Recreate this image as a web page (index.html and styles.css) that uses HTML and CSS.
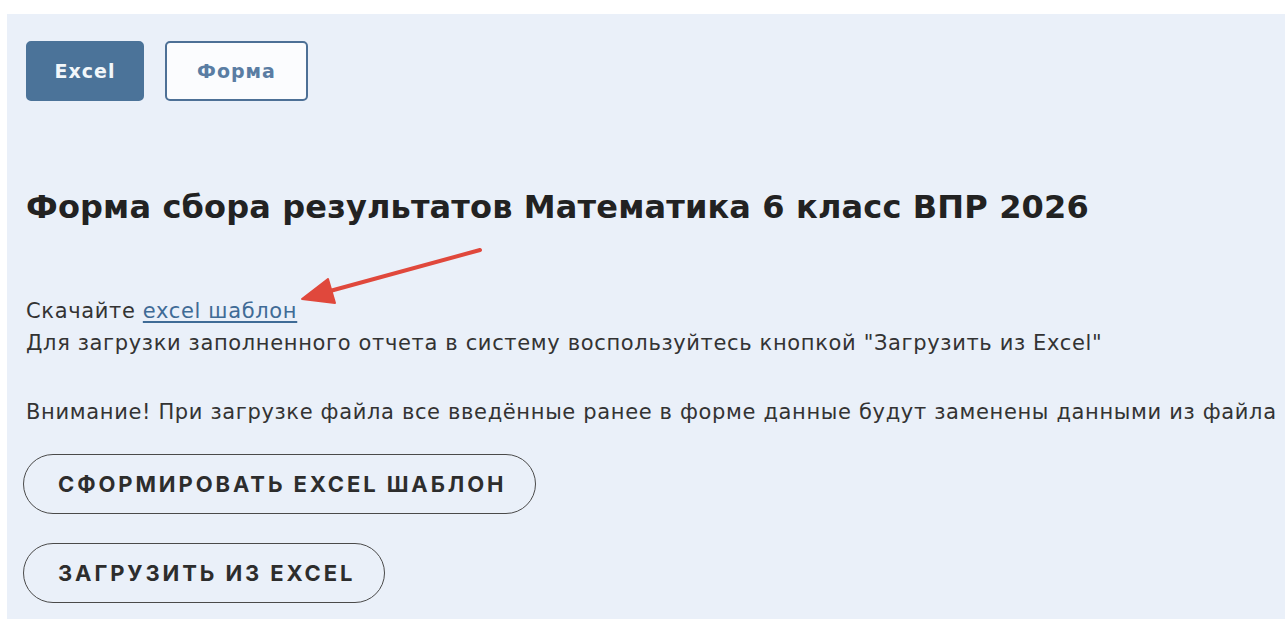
FILE: index.html
```html
<!DOCTYPE html>
<html lang="ru">
<head>
<meta charset="utf-8">
<title>Форма сбора результатов</title>
<link rel="stylesheet" href="styles.css">
</head>
<body>
<main class="page">
  <nav class="tabs">
    <button class="tab tab-active">Excel</button>
    <button class="tab">Форма</button>
  </nav>

  <h1 class="title">Форма сбора результатов Математика 6 класс ВПР 2026</h1>

  <div class="info">
    <p class="line">Скачайте <a class="link" href="#">excel шаблон</a></p>
    <p class="line">Для загрузки заполненного отчета в систему воспользуйтесь кнопкой "Загрузить из Excel"</p>
    <p class="line warn">Внимание! При загрузке файла все введённые ранее в форме данные будут заменены данными из файла</p>
  </div>

  <div class="actions">
    <button class="pill">СФОРМИРОВАТЬ EXCEL ШАБЛОН</button>
    <button class="pill">ЗАГРУЗИТЬ ИЗ EXCEL</button>
  </div>

  <!-- pointer arrow drawn over the text -->
  <svg class="arrow" width="200" height="80" viewBox="0 0 200 80">
    <line x1="190" y1="10" x2="40" y2="51" stroke="#e0483c" stroke-width="4" stroke-linecap="round"/>
    <polygon points="12,59 45,63 38,39" fill="#e0483c" stroke="#e0483c" stroke-width="2" stroke-linejoin="round"/>
  </svg>
</main>
</body>
</html>
```

FILE: styles.css
```css
html, body {
  margin: 0;
  padding: 0;
  background: #ffffff;
}

.page {
  position: relative;
  margin: 14px 0 0 7px;
  height: 605px;
  box-sizing: border-box;
  padding: 27px 0 0 19px;
  background: #eaf0f9;
  font-family: "DejaVu Sans", Roboto, sans-serif;
  color: #333333;
  overflow: hidden;
}

.tabs {
  display: flex;
  gap: 21px;
}

.tab {
  height: 60px;
  box-sizing: border-box;
  border-radius: 5px;
  background: #fbfcfe;
  border: 2px solid #4d7096;
  color: #5a7da3;
  font-family: "DejaVu Sans", sans-serif;
  font-size: 19px;
  font-weight: 700;
  letter-spacing: 1px;
  cursor: pointer;
}

.tab:first-child {
  width: 118px;
}

.tab:last-child {
  width: 143px;
}

.tab-active {
  background: #4b7399;
  border-color: #4b7399;
  color: #f2f7fa;
}

.title {
  margin: 88px 0 0 0;
  font-size: 32px;
  font-weight: 700;
  line-height: 36px;
  letter-spacing: 0.15px;
  color: #222222;
}

.info {
  margin-top: 70px;
}

.line {
  margin: 0;
  font-size: 21px;
  line-height: 32px;
  letter-spacing: 0.65px;
}

.warn {
  margin-top: 37px;
}

.link {
  color: #3f6b96;
  text-decoration: underline;
  text-underline-offset: 3px;
}

.actions {
  margin-top: 26px;
  margin-left: -3px;
  display: flex;
  flex-direction: column;
  align-items: flex-start;
  gap: 29px;
}

.pill {
  height: 60px;
  box-sizing: border-box;
  padding: 0 29px 0 34px;
  border: 1.5px solid #4a4a4a;
  border-radius: 30px;
  background: transparent;
  font-family: Inter, "Open Sans", sans-serif;
  font-size: 22px;
  font-weight: 700;
  letter-spacing: 2.9px;
  color: #2d2d2d;
  cursor: pointer;
}

.arrow {
  position: absolute;
  left: 283px;
  top: 226px;
}
```
